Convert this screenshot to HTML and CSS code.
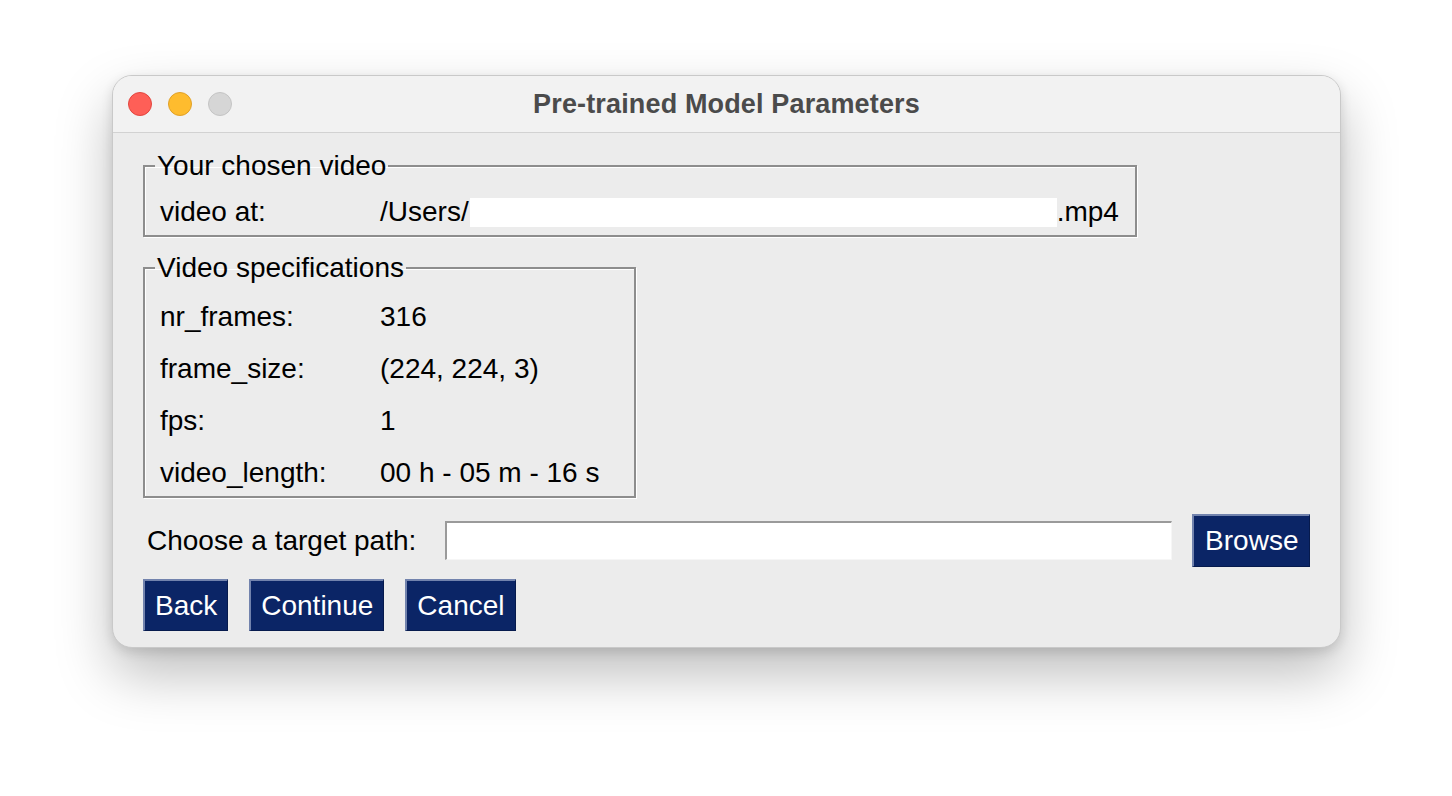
FILE: index.html
```html
<!DOCTYPE html>
<html lang="en">
<head>
<meta charset="utf-8">
<title>Pre-trained Model Parameters</title>
<link rel="stylesheet" href="styles.css">
</head>
<body>
<div class="window">
  <div class="titlebar">
    <div class="lights">
      <span class="light red"></span>
      <span class="light yellow"></span>
      <span class="light gray"></span>
    </div>
    <div class="title">Pre-trained Model Parameters</div>
  </div>
  <div class="content">
    <fieldset class="group group-video">
      <legend>Your chosen video</legend>
      <div class="row">
        <span class="key">video at:</span>
        <span class="val">/Users/<span class="redact"></span>.mp4</span>
      </div>
    </fieldset>
    <fieldset class="group group-specs">
      <legend>Video specifications</legend>
      <div class="row"><span class="key">nr_frames:</span><span class="val">316</span></div>
      <div class="row"><span class="key">frame_size:</span><span class="val">(224, 224, 3)</span></div>
      <div class="row"><span class="key">fps:</span><span class="val">1</span></div>
      <div class="row"><span class="key">video_length:</span><span class="val">00 h - 05 m - 16 s</span></div>
    </fieldset>
    <div class="target">
      <label class="target-label" for="target">Choose a target path:</label>
      <input id="target" class="entry" type="text">
      <button class="btn btn-browse">Browse</button>
    </div>
    <div class="actions">
      <button class="btn">Back</button>
      <button class="btn">Continue</button>
      <button class="btn">Cancel</button>
    </div>
  </div>
</div>
</body>
</html>
```
FILE: styles.css
```css
* { box-sizing: border-box; }
html, body { margin: 0; padding: 0; background: #ffffff; }
body {
  font-family: "Liberation Sans", Arial, sans-serif;
  color: #000;
  padding: 75px 0 0 112px;
  min-height: 796px;
}
.window {
  width: 1229px;
  height: 573px;
  border-radius: 20px;
  overflow: hidden;
  background: #ececec;
  border: 1px solid #c9c9c9;
  box-shadow: 0 26px 55px rgba(0, 0, 0, 0.26), 0 4px 12px rgba(0, 0, 0, 0.12);
  display: flex;
  flex-direction: column;
}
.titlebar {
  height: 57px;
  flex: none;
  background: #f2f2f2;
  border-bottom: 1px solid #d2d2d2;
  display: flex;
  align-items: center;
  position: relative;
}
.lights {
  display: flex;
  gap: 16px;
  padding-left: 15px;
}
.light {
  width: 24px;
  height: 24px;
  border-radius: 50%;
  display: block;
}
.red { background: #fe5f57; border: 1px solid #e2463f; }
.yellow { background: #febc2e; border: 1px solid #e0a028; }
.gray { background: #d6d6d6; border: 1px solid #c4c4c4; }
.title {
  position: absolute;
  left: 0;
  right: 0;
  top: 14px;
  text-align: center;
  font-weight: bold;
  font-size: 27px;
  line-height: 28px;
  color: #4b4b4b;
  letter-spacing: 0.15px;
}
.content {
  padding: 20px 0 0 30px;
  font-size: 28px;
}
.group {
  margin: 0;
  border: 2px solid #8d8d8d;
  box-shadow: 1px 1px 0 #ffffff, inset 1px 1px 0 #ffffff;
  padding: 11px 0 1px 15px;
  min-inline-size: 0;
}
.group legend {
  padding: 0 2px;
  margin-left: -5px;
  line-height: 26px;
}
.group-video { width: 994px; }
.group-specs {
  width: 493px;
  margin-top: 18px;
  padding-top: 14px;
}
.row {
  display: flex;
  align-items: center;
  height: 44px;
}
.group-specs .row + .row { margin-top: 8px; }
.key { width: 220px; flex: none; }
.val { display: flex; align-items: center; }
.redact {
  display: inline-block;
  width: 587px;
  height: 29px;
  background: #ffffff;
  margin-left: 1px;
}
.target {
  display: flex;
  align-items: center;
  margin-top: 16px;
  height: 53px;
}
.target-label { margin-left: 4px; }
.entry {
  width: 727px;
  height: 39px;
  margin-left: 29px;
  background: #ffffff;
  border: none;
  border-top: 2px solid #9a9a9a;
  border-left: 2px solid #9a9a9a;
  border-right: 1px solid #f6f6f6;
  border-bottom: 1px solid #f6f6f6;
  outline: none;
}
.btn {
  font-family: "Liberation Sans", Arial, sans-serif;
  font-size: 28px;
  color: #ffffff;
  background: #0b2566;
  border: none;
  border-top: 2px solid #7283ad;
  border-left: 2px solid #7283ad;
  border-right: 1px solid #061a4d;
  border-bottom: 1px solid #061a4d;
  height: 52px;
  padding: 0 10px 0 10px;
  line-height: 1;
  border-radius: 0;
}
.btn-browse {
  margin-left: 20px;
  height: 53px;
  width: 118px;
  padding: 0;
}
.actions {
  display: flex;
  gap: 21px;
  margin-top: 12px;
}
```
